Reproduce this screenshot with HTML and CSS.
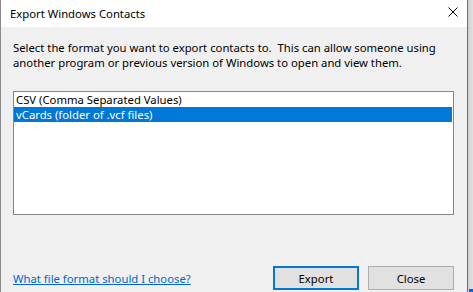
FILE: index.html
```html
<!DOCTYPE html>
<html lang="en">
<head>
  <meta charset="UTF-8" />
  <title>Export Windows Contacts</title>
  <link rel="stylesheet" href="styles.css">
</head>
<body>
  <div class="screen">
    <div class="window">
      <div class="titlebar">
        <span class="title">Export Windows Contacts</span>
        <span class="close-x">
          <svg width="10" height="10" viewBox="0 0 10 10">
            <path d="M0.5 0.5 L9.5 9.5 M9.5 0.5 L0.5 9.5" stroke="#000" stroke-width="1" fill="none" />
          </svg>
        </span>
      </div>
      <div class="content">
        <p class="intro">Select the format you want to export contacts to.&nbsp; This can allow someone using<br>another program or previous version of Windows to open and view them.</p>
        <div class="listbox">
          <div class="item">CSV (Comma Separated Values)</div>
          <div class="item selected">vCards (folder of .vcf files)</div>
        </div>
        <div class="footer">
          <a href="#" class="help-link">What file format should I choose?</a>
          <div class="buttons">
            <button class="btn default">Export</button>
            <button class="btn">Close</button>
          </div>
        </div>
      </div>
    </div>
    <div class="edge">
      <div class="edge-mark"></div>
    </div>
  </div>
</body>
</html>
```

FILE: styles.css
```css
html, body {
  margin: 0;
  padding: 0;
}
body {
  font-family: "Noto Sans", "Open Sans", sans-serif;
  font-size: 11.3px;
  color: #000;
  background: #f0f0f0;
}
.screen {
  display: flex;
  width: 473px;
  height: 292px;
  overflow: hidden;
}
.window {
  width: 466px;
  height: 300px;
  flex-shrink: 0;
  border-left: 1px solid #8a8a8a;
  border-right: 1px solid #6e6e6e;
  background: #f0f0f0;
  display: flex;
  flex-direction: column;
}
.titlebar {
  height: 27px;
  flex-shrink: 0;
  background: #fff;
  display: flex;
  align-items: center;
  justify-content: space-between;
  padding-left: 9px;
  padding-right: 8px;
}
.title {
  line-height: 15px;
  white-space: nowrap;
}
.close-x {
  display: flex;
  margin-bottom: 3px;
  margin-right: 1px;
}
.content {
  padding: 13px 13px 0 12px;
  display: flex;
  flex-direction: column;
}
.intro {
  margin: 0;
  line-height: 15px;
  white-space: nowrap;
}
.listbox {
  margin-top: 21px;
  height: 122px;
  border: 1px solid #828790;
  background: #fff;
}
.item {
  height: 15px;
  line-height: 15px;
  padding-left: 2px;
  white-space: nowrap;
}
.item.selected {
  background: #0078d7;
  color: #fff;
  margin-right: 1px;
}
.footer {
  margin-top: 51px;
  display: flex;
  align-items: center;
  justify-content: space-between;
}
.help-link {
  color: #0066cc;
  text-decoration: underline;
  white-space: nowrap;
}
.buttons {
  display: flex;
  gap: 9px;
}
.btn {
  width: 86px;
  height: 24px;
  font-family: inherit;
  font-size: 11.3px;
  background: #e1e1e1;
  border: 1px solid #adadad;
  color: #000;
  padding: 0;
}
.btn.default {
  border: 2px solid #0078d7;
}
.edge {
  flex: 1;
  background: linear-gradient(to right, #cfcfcf, #e2e2e2);
  display: flex;
  flex-direction: column;
  justify-content: flex-end;
}
.edge-mark {
  height: 3px;
  margin-left: 1px;
  background: #0b5fd8;
}
```
